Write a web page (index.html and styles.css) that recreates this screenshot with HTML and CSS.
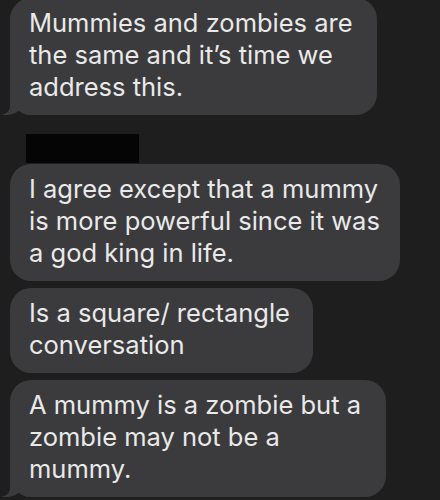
FILE: index.html
```html
<!DOCTYPE html>
<html>
<head>
<meta charset="utf-8">
<link rel="stylesheet" href="styles.css">
</head>
<body>
<div class="thread">
  <div class="bubble b1 tailed">Mummies and zombies are<br>the same and it’s time we<br>address this.<svg class="tail" viewBox="0 0 28 22" width="28" height="22"><path d="M10 0 L10 13 C10 17.5 7 20.5 1.5 21.8 C8 22.8 15 21.2 19.5 17.3 C21 19.5 24 21 28 22 L28 0 Z"/></svg></div>
  <div class="redact"></div>
  <div class="bubble b2">I agree except that a mummy<br>is more powerful since it was<br>a god king in life.</div>
  <div class="bubble b3">Is a square/ rectangle<br>conversation</div>
  <div class="bubble b4 tailed">A mummy is a zombie but a<br>zombie may not be a<br>mummy.<svg class="tail" viewBox="0 0 28 22" width="28" height="22"><path d="M10 0 L10 13 C10 17.5 7 20.5 1.5 21.8 C8 22.8 15 21.2 19.5 17.3 C21 19.5 24 21 28 22 L28 0 Z"/></svg></div>
</div>
</body>
</html>
```
FILE: styles.css
```css
html, body {
  margin: 0;
  background: #1e1e1e;
  height: 100%;
  overflow: hidden;
}
.thread {
  display: flex;
  flex-direction: column;
  align-items: flex-start;
  padding-left: 10px;
  margin-top: -2px;
}
.bubble {
  position: relative;
  box-sizing: border-box;
  background: #3b3b3d;
  color: #e9e9e9;
  font-family: Inter, "Noto Sans", sans-serif;
  font-size: 25.5px;
  line-height: 32px;
  padding: 9px 10px 12px 19px;
  border-radius: 21px;
  white-space: nowrap;
}
.b1 { width: 367px; }
.b2 { width: 390px; margin-top: 1px; }
.b3 { width: 303px; margin-top: 7px; }
.b4 { width: 376px; margin-top: 7px; }
.tail {
  position: absolute;
  left: -10px;
  bottom: 0;
  fill: #3b3b3d;
}
.redact {
  width: 113px;
  height: 29px;
  background: #050505;
  margin: 19px 0 0 16px;
}
```
